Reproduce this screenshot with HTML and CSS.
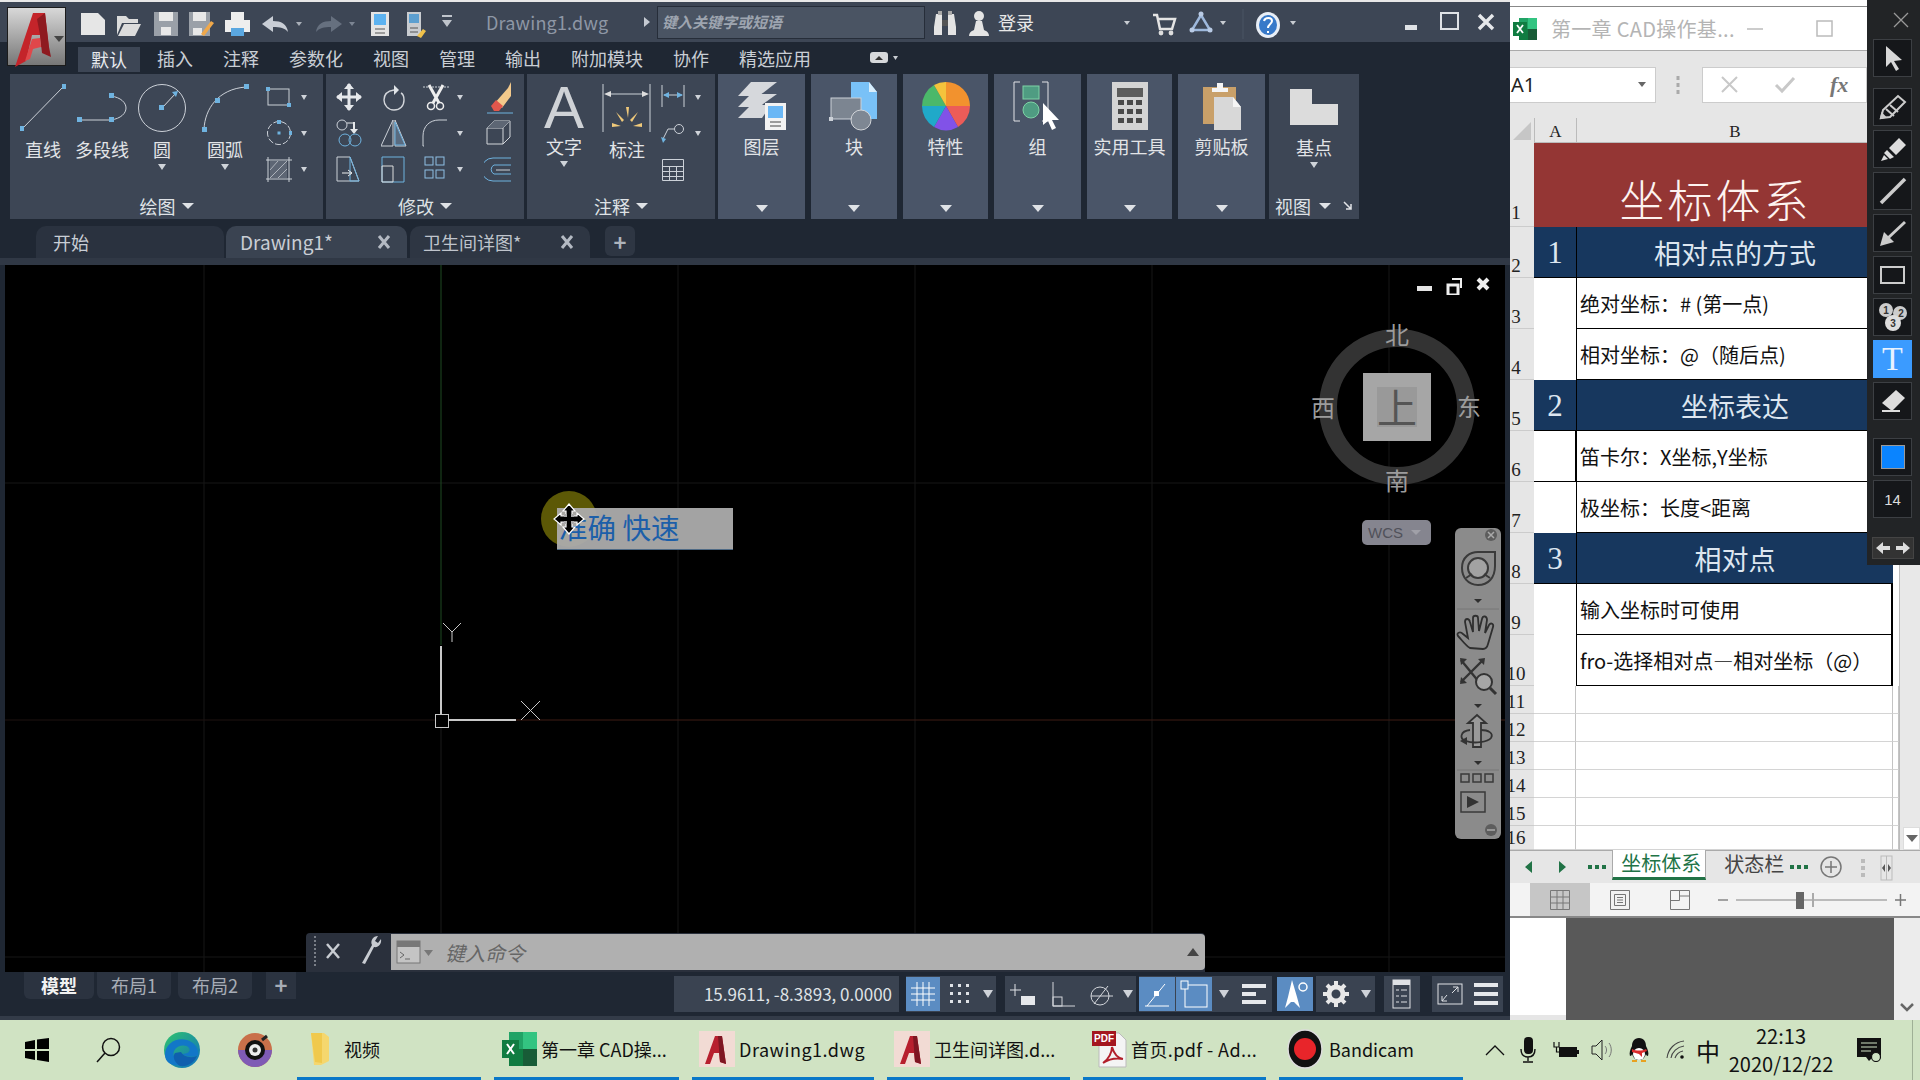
FILE: index.html
```html
<!DOCTYPE html>
<html lang="zh">
<head>
<meta charset="utf-8">
<title>AutoCAD and Excel</title>
<link rel="stylesheet" href="styles.css">
</head>
<body>
<main class="desk">

<!-- AutoCAD window -->
<section class="cad">
  <div class="cad-logo">
    <svg width="59" height="59" viewBox="7 7 59 59"><path d="M14 66 32 12h12l4 36-8-2-1-12-8 0-6 26z" fill="#c4242a"/><path d="M44 12l4 34 2 10-9-4-2-18-3-16z" fill="#8e1a20"/><path d="M24 60l7-22 8-1 1 9-8 2-3 10z" fill="#e0474a"/><path d="M53 35h10l-5 6z" fill="#444"/></svg>
  </div>
  <header class="cad-title">
    <svg class="qat" width="380" height="40" viewBox="78 2 380 40">
      <path d="M81 13h17l7 7v15H81z" fill="#e6e6e6"/>
      <path d="M117 16h9l3 3h9v4h-16l-5 12zM124 24h17l-6 12h-17z" fill="#dcdcdc"/>
      <path d="M154 12h24v24h-24z" fill="#9aa0a8"/><rect x="159" y="12" width="14" height="9" fill="#e8e8e8"/><rect x="161" y="27" width="10" height="8" fill="#e8e8e8"/>
      <path d="M189 12h21v24h-21z" fill="#9aa0a8"/><rect x="193" y="12" width="13" height="9" fill="#e8e8e8"/><rect x="193" y="28" width="9" height="7" fill="#e8e8e8"/><path d="M201 34l10-13 3 2-10 13z" fill="#f0a84a"/>
      <rect x="225" y="20" width="25" height="12" fill="#eee"/><rect x="231" y="12" width="13" height="8" fill="#eee"/><rect x="231" y="28" width="13" height="8" fill="#5aa7e0"/>
      <path d="M262 24l11-8v5c8 0 14 3 15 11-3-4-8-5-15-5v5z" fill="#c9ced6"/><path d="M296 22h6l-3 4z" fill="#a9afb8"/>
      <path d="M342 24l-11-8v5c-8 0-14 3-15 11 3-4 8-5 15-5v5z" fill="#66707f"/><path d="M349 22h6l-3 4z" fill="#7c8593"/>
      <rect x="371" y="12" width="18" height="24" fill="#e4e4e4"/><rect x="374" y="14" width="12" height="11" fill="#5cb2f0"/><path d="M375 29h10M375 33h10" stroke="#555"/>
      <rect x="407" y="12" width="14" height="24" fill="#c9ccd0"/><rect x="409" y="14" width="10" height="9" fill="#5c9fd0"/><path d="M410 28h8M410 32h8" stroke="#555"/><path d="M417 36l6-7 3 2-5 7z" fill="#f0c14a"/>
      <path d="M442 15h10v2h-10zM442 20h10l-5 7z" fill="#bfc4cb"/>
    </svg>
    <span class="doc-name">Drawing1.dwg</span>
    <svg class="next" width="10" height="14" viewBox="0 0 10 14"><path d="M2 2l6 5-6 5z" fill="#c5cad2"/></svg>
    <div class="search">键入关键字或短语</div>
    <svg class="binoc" width="58" height="30" viewBox="935 8 58 30"><path d="M938 15h6v21h-8v-8zM950 15h6l2 13v8h-8z" fill="#e4e4e4"/><path d="M944 21h6v6h-6z" fill="#555"/><path d="M940 12h4v4h-4zM950 12h4v4h-4z" fill="#aaa"/><circle cx="981" cy="17" r="5" fill="#e4e4e4"/><path d="M978 22h6l2 9h-10zM971 37c0-5 6-7 10-7s10 2 10 7z" fill="#e4e4e4"/></svg>
    <span class="login">登录</span>
    <svg class="tray" width="180" height="40" viewBox="1122 2 180 40"><path d="M1126 21h6l-3 4zM1222 21h6l-3 4zM1292 21h6l-3 4z" fill="#c8ccd2"/><path d="M1155 15h4l3 14h12l3-10h-17" fill="none" stroke="#e4e4e4" stroke-width="2.5"/><circle cx="1163" cy="33" r="2.4" fill="#ddd"/><circle cx="1173" cy="33" r="2.4" fill="#ddd"/><path d="M1203 15l-9 15h18z" fill="none" stroke="#9db8dc" stroke-width="2.5"/><circle cx="1203" cy="14" r="2.5" fill="#b9cbe5"/><circle cx="1194" cy="30" r="2.5" fill="#b9cbe5"/><circle cx="1212" cy="30" r="2.5" fill="#b9cbe5"/><path d="M1245 9v30" stroke="#4b5564"/><ellipse cx="1270" cy="25" rx="12" ry="13" fill="#e8eef6"/><ellipse cx="1270" cy="25" rx="9" ry="10" fill="#3779c9"/><path d="M1266 21c1-4 8-4 8 0 0 3-4 3-4 7M1270 31v2" stroke="#fff" stroke-width="2" fill="none"/></svg>
    <svg class="winbtns" width="105" height="40" viewBox="1400 2 105 40"><path d="M1407 25h12v5h-12z" fill="#dfe2e6"/><rect x="1443" y="13" width="17" height="16" fill="none" stroke="#dfe2e6" stroke-width="2"/><path d="M1481 15l14 14M1495 15l-14 14" stroke="#e6e8eb" stroke-width="3.4"/></svg>
  </header>

  <nav class="cad-menu">
    <span class="menu-item on">默认</span><span class="menu-item">插入</span><span class="menu-item">注释</span><span class="menu-item">参数化</span><span class="menu-item">视图</span><span class="menu-item">管理</span><span class="menu-item">输出</span><span class="menu-item">附加模块</span><span class="menu-item">协作</span><span class="menu-item">精选应用</span>
    <svg class="menu-toggle" width="30" height="14" viewBox="0 0 30 14"><rect x="1" y="1" width="18" height="11" rx="3" fill="#d7d9dc"/><path d="M6 9l4-4 4 4z" fill="#333"/><path d="M24 5h5l-2.5 4z" fill="#c8ccd2"/></svg>
  </nav>

  <div class="ribbon">
    <div class="panel p-draw">
      <div class="p-body">
        <div class="tool w58">
          <svg width="46" height="48" viewBox="19 84 46 48"><path d="M21 129 63 86" stroke="#ccd1d8" fill="none"/><rect x="18" y="126" width="5" height="5" fill="#6fb3e0"/><rect x="61" y="84" width="5" height="5" fill="#6fb3e0"/></svg>
          <span class="tl">直线</span>
        </div>
        <div class="tool w60">
          <svg width="56" height="48" viewBox="74 84 56 48"><path d="M80 120h31M111 96c20 3 20 21 0 24" stroke="#ccd1d8" fill="none"/><g fill="#6fb3e0"><rect x="77" y="117" width="5" height="5"/><rect x="109" y="117" width="5" height="5"/><rect x="109" y="93" width="5" height="5"/></g></svg>
          <span class="tl">多段线</span>
        </div>
        <div class="tool w60">
          <svg width="50" height="48" viewBox="137 84 50 48"><ellipse cx="162" cy="108" rx="23.5" ry="23.5" fill="none" stroke="#ccd1d8"/><path d="M162 108l14-15" stroke="#d8dce2"/><path d="M178 91l-6 1 4 5z" fill="#6fb3e0"/><rect x="159" y="105" width="5" height="5" fill="#6fb3e0"/></svg>
          <span class="tl">圆</span><i class="tcaret"></i>
        </div>
        <div class="tool w66">
          <svg width="48" height="48" viewBox="202 84 48 48"><path d="M205 129c1-20 14-40 42-42" stroke="#ccd1d8" fill="none"/><g fill="#6fb3e0"><rect x="203" y="127" width="5" height="5"/><rect x="216" y="98" width="5" height="5"/><rect x="245" y="84" width="5" height="5"/></g></svg>
          <span class="tl">圆弧</span><i class="tcaret"></i>
        </div>
        <div class="small-col sc-draw">
          <div class="srow"><svg width="26" height="28" viewBox="266 83 26 28"><rect x="268" y="89" width="21" height="16" fill="none" stroke="#ccd1d8"/><g fill="#6fb3e0"><rect x="266" y="87" width="4" height="4"/><rect x="287" y="103" width="4" height="4"/></g></svg><i class="scaret"></i></div>
          <div class="srow"><svg width="26" height="28" viewBox="266 119 26 28"><circle cx="279" cy="133" r="11.5" fill="none" stroke="#ccd1d8" stroke-dasharray="6 2"/><rect x="277.5" y="131.500" width="3" height="3" fill="#6fb3e0"/><rect x="277" y="120" width="4" height="4" fill="#6fb3e0"/><rect x="289" y="131" width="4" height="4" fill="#6fb3e0"/></svg><i class="scaret"></i></div>
          <div class="srow"><svg width="26" height="28" viewBox="266 155 26 28"><path d="M268 157v25M289 157v25M266 160h26M266 179h26" stroke="#ccd1d8" fill="none"/><rect x="270" y="161" width="17" height="17" fill="#5d6674"/><path d="M270 170l8-9M270 178l17-17M278 178l9-9" stroke="#aeb4bc"/></svg><i class="scaret"></i></div>
        </div>
      </div>
      <div class="p-foot">绘图<i class="fcaret"></i></div>
    </div>

    <div class="panel p-mod">
      <div class="p-body mod-grid">
        <svg width="26" height="28" viewBox="336 83 26 28"><path d="M349 84v26M337 97h24" stroke="#e6e8eb" stroke-width="3"/><path d="M349 83l-5 6h10zM349 111l-5-6h10zM336 97l6-5v10zM362 97l-6-5v10z" fill="#e6e8eb"/></svg>
        <svg width="26" height="28" viewBox="380 83 26 28"><path d="M393 90c-7 1-10 5-10 10s4 10 10 10 10-4 10-10c0-3-1-6-3-7" fill="none" stroke="#d3d6db" stroke-width="1.400"/><path d="M393 85l5 5-5 5z" fill="#e0e3e7"/></svg>
        <div class="mcell"><svg width="28" height="28" viewBox="422 83 28 28"><path d="M423 87h26" stroke="#ccd1d8" stroke-dasharray="2 1"/><path d="M429 85l10 18M443 85l-10 18" stroke="#eee" stroke-width="3"/><circle cx="431" cy="106" r="3.500" fill="none" stroke="#eee" stroke-width="1.500"/><circle cx="440" cy="106" r="3.500" fill="none" stroke="#eee" stroke-width="1.500"/></svg><i class="scaret"></i></div>
        <svg width="30" height="36" viewBox="483 80 30 36"><path d="M493 105l14-16 3-6v14l-9 12z" fill="#f3c98b"/><path d="M490 107l5-6 7 6-4 5h-5z" fill="#e2574c"/><path d="M486 114h26" stroke="#6fb3e0"/></svg>

        <svg width="26" height="30" viewBox="336 118 26 30"><circle cx="342" cy="125" r="5" fill="none" stroke="#ccd1d8"/><path d="M354 122v7" stroke="#e6e8eb" stroke-width="2"/><path d="M350 129h8l-4 5z" fill="#e6e8eb"/><path d="M347 123h7" stroke="#e6e8eb"/><circle cx="345" cy="140" r="6" fill="none" stroke="#6fb3e0"/><circle cx="355" cy="140" r="6" fill="none" stroke="#6fb3e0"/></svg>
        <svg width="26" height="30" viewBox="380 118 26 30"><path d="M392 120v26h-12zM394 120v26h11z" fill="none" stroke="#ccd1d8"/><path d="M394 122l10 23h-10z" fill="#596b80" stroke="#6fb3e0"/></svg>
        <div class="mcell"><svg width="28" height="28" viewBox="422 119 28 28"><path d="M423 146v-10c0-10 7-16 16-16h8" fill="none" stroke="#ccd1d8"/><path d="M423 146h1" stroke="#ccd1d8"/></svg><i class="scaret"></i></div>
        <svg width="30" height="30" viewBox="483 118 30 30"><path d="M486 128h16v16h-16zM486 128l7-7h16l-7 7M502 144l7-7v-16" fill="none" stroke="#d3d6db"/><path d="M486 128l7-7h16l-7 7z" fill="#5d6674"/></svg>

        <svg width="28" height="30" viewBox="336 154 28 30"><path d="M338 157h13l9 24h-22z" fill="none" stroke="#ccd1d8"/><path d="M351 157l9 24H351z" fill="none" stroke="#6fb3e0"/><path d="M343 173h9M349 170l4 3-4 3" stroke="#eee" fill="none"/></svg>
        <svg width="28" height="30" viewBox="379 154 28 30"><path d="M381 157h22v25h-22z" fill="none" stroke="#6fb3e0"/><path d="M381 166h11v16h-11z" fill="none" stroke="#ddd"/></svg>
        <div class="mcell"><svg width="28" height="28" viewBox="422 155 28 28"><g fill="none" stroke="#8fc0e6"><rect x="425" y="157" width="8" height="8"/><rect x="436" y="157" width="8" height="8"/><rect x="425" y="170" width="8" height="8"/><rect x="436" y="170" width="8" height="8"/></g></svg><i class="scaret"></i></div>
        <svg width="30" height="30" viewBox="483 154 30 30"><path d="M510 158h-18a11 11 0 0 0 0 23h18M510 165h-17a5 5 0 0 0 0 9h17" fill="none" stroke="#6fb3e0"/><path d="M495 170h14" stroke="#ccd1d8"/></svg>
      </div>
      <div class="p-foot">修改<i class="fcaret"></i></div>
    </div>

    <div class="panel p-ann">
      <div class="p-body">
        <div class="tool w74"><span class="big-a">A</span><span class="tl tl-a">文字</span><i class="tcaret"></i></div>
        <div class="tool w52">
          <svg width="50" height="48" viewBox="602 84 50 48"><path d="M603 84v48M650 84v48M606 94h41" stroke="#ccd1d8" fill="none"/><path d="M604 94l7-3v6zM649 94l-7-3v6z" fill="#ddd"/><g fill="#f0c97a"><path d="M626 107h3l-1 11zM612 123l9 3-9 1zM642 123l-9 3 9 1zM616 112l8 8-2 2zM638 112l-8 8 2 2z"/></g></svg>
          <span class="tl">标注</span>
        </div>
        <div class="small-col sc-ann">
          <div class="srow"><svg width="26" height="28" viewBox="662 83 26 28"><path d="M664 85v22M686 85v22M666 95h18" stroke="#ccd1d8" fill="none"/><path d="M665 95l6-3v6zM685 95l-6-3v6z" fill="#6fb3e0"/></svg><i class="scaret"></i></div>
          <div class="srow"><svg width="26" height="30" viewBox="662 118 26 30"><circle cx="681" cy="129" r="4.500" fill="none" stroke="#ccd1d8"/><path d="M676 129h-6l-5 10" fill="none" stroke="#ccd1d8"/><path d="M665 143l-2-6 5 2z" fill="#6fb3e0"/></svg><i class="scaret"></i></div>
          <div class="srow"><svg width="26" height="26" viewBox="662 156 26 26"><path d="M664.500 159.500h21v21h-21zM664.500 166.500h21M664.500 171.500h21M664.500 176.500h21M671.500 166.500v14M678.500 166.500v14" fill="none" stroke="#ccd1d8"/></svg></div>
        </div>
      </div>
      <div class="p-foot">注释<i class="fcaret"></i></div>
    </div>

    <div class="panel large w87">
      <svg width="60" height="50" viewBox="732 81 60 50"><g fill="#d6d8dc"><path d="M751 82h26l-18 14h-21z"/><path d="M751 94h26l-18 13h-21z"/><path d="M751 105h20l-9 13h-24z"/></g><rect x="765" y="103" width="21" height="27" fill="#f2f2f2"/><rect x="768" y="106" width="15" height="12" fill="#6ab7f5"/><path d="M770 122h11M770 126h11" stroke="#444"/></svg>
      <span class="tl">图层</span><i class="lcaret"></i>
    </div>
    <div class="panel large w86">
      <svg width="60" height="50" viewBox="825 81 60 50"><path d="M852 82h18l8 10v27h-26z" fill="#79c1f7"/><path d="M870 82l8 10h-8z" fill="#d9eefc"/><rect x="832" y="98" width="30" height="21" fill="#7c8591" stroke="#ccd1d8"/><rect x="830" y="117" width="4" height="4" fill="#ccd1d8"/><circle cx="862" cy="120" r="10" fill="#7e8793" stroke="#d2d5d9"/></svg>
      <span class="tl">块</span><i class="lcaret"></i>
    </div>
    <div class="panel large w85">
      <svg width="52" height="50" viewBox="920 81 52 50"><path d="M946 106 946 82A24 24 0 0 1 970 106z" fill="#f2922e"/><path d="M946 106H970A24 24 0 0 1 958 127z" fill="#ec5c58"/><path d="M946 106 958 127A24 24 0 0 1 934 127z" fill="#8152e8"/><path d="M946 106 934 127A24 24 0 0 1 922 106z" fill="#20a9c9"/><path d="M946 106H922A24 24 0 0 1 934 85z" fill="#4bb86a"/><path d="M946 106 934 85A24 24 0 0 1 946 82z" fill="#f4c33c"/></svg>
      <span class="tl">特性</span><i class="lcaret"></i>
    </div>
    <div class="panel large w87">
      <svg width="52" height="50" viewBox="1014 81 52 50"><path d="M1022 82h-6v39h6M1044 82h6v39h-6" fill="none" stroke="#e2e4e7"/><rect x="1025" y="86" width="16" height="13" fill="#4f9c82" stroke="#7ed3a6"/><ellipse cx="1033" cy="110" rx="8" ry="8" fill="#4f9c82" stroke="#7ed3a6"/><path d="M1045 103v22l5-4 4 9 4-2-4-8h7z" fill="#fff"/></svg>
      <span class="tl">组</span><i class="lcaret"></i>
    </div>
    <div class="panel large w85">
      <svg width="40" height="50" viewBox="1110 81 40 50"><rect x="1112" y="82" width="36" height="48" fill="#d4d4d4"/><rect x="1117" y="88" width="26" height="9" fill="#5c5c5c"/><g fill="#4a4a4a"><rect x="1118" y="100" width="6" height="5"/><rect x="1127" y="100" width="6" height="5"/><rect x="1136" y="100" width="6" height="5"/><rect x="1118" y="109" width="6" height="5"/><rect x="1127" y="109" width="6" height="5"/><rect x="1136" y="109" width="6" height="5"/><rect x="1118" y="118" width="6" height="5"/><rect x="1127" y="118" width="6" height="5"/><rect x="1136" y="118" width="6" height="5"/></g></svg>
      <span class="tl">实用工具</span><i class="lcaret"></i>
    </div>
    <div class="panel large w87">
      <svg width="44" height="50" viewBox="1200 81 44 50"><rect x="1203" y="87" width="33" height="37" fill="#c9a069"/><path d="M1214 97h19l8 10v23h-27z" fill="#d8d8d8"/><path d="M1233 97l8 10h-8z" fill="#f5f5f5"/><path d="M1212 92h16v-4h-5v-5h-6v5h-5z" fill="#f5f5f5"/></svg>
      <span class="tl">剪贴板</span><i class="lcaret"></i>
    </div>
    <div class="panel view-p">
      <div class="p-body view-body">
        <svg width="52" height="38" viewBox="1288 88 52 38"><path d="M1290 89h22v15h26v21h-48z" fill="#dcdcdc"/></svg>
        <span class="tl">基点</span><i class="tcaret"></i>
      </div>
      <div class="p-foot view-foot">视图<i class="fcaret"></i><svg class="launch" width="10" height="10" viewBox="0 0 10 10"><path d="M1 1l7 7M8 3v5H3" fill="none" stroke="#e2e4e7" stroke-width="1.500"/></svg></div>
    </div>
  </div>

  <div class="tabs">
    <div class="tab t-start">开始</div>
    <div class="tab t-active">Drawing1*<svg width="14" height="14" viewBox="0 0 14 14"><path d="M2 1l10 12M12 1 2 13" stroke="#b4bac3" stroke-width="3"/></svg></div>
    <div class="tab t-other">卫生间详图*<svg width="14" height="14" viewBox="0 0 14 14"><path d="M2 1l10 12M12 1 2 13" stroke="#b4bac3" stroke-width="3"/></svg></div>
    <div class="tab-add">+</div>
  </div>

  <div class="canvas">
    <svg class="cv-lines" width="1500" height="707" viewBox="5 265 1500 707">
      <g stroke="#171717"><path d="M204 265v707M678 265v707M915 265v707M1152 265v707M1389 265v707M5 246h1500M5 483h1500M5 957h1500"/></g>
      <circle cx="569" cy="519" r="28" fill="#5c5806"/>
      <path d="M441 265v380" stroke="#1f4a22"/><path d="M441 728v244" stroke="#1a1a1a"/><path d="M516 720h989" stroke="#3f1d14"/><path d="M5 720h430" stroke="#1e1210"/>
      <path d="M441 646v68M449 720h67" stroke="#c8c8c8" stroke-width="2"/><rect x="435.500" y="714.500" width="13" height="13" fill="none" stroke="#c8c8c8"/>
      <path d="M443 623l9 9 9-9M452 632v10" fill="none" stroke="#c8c8c8"/><path d="M521 701l19 19M540 701l-19 19" stroke="#c8c8c8"/>
    </svg>
    <div class="mtext">准确 快速</div>
    <svg class="cursor" width="32" height="32" viewBox="0 0 32 32"><path d="M16 1l6 7h-3v5h5v-3l7 6-7 6v-3h-5v5h3l-6 7-6-7h3v-5H8v3l-7-6 7-6v3h5V8h-3z" fill="#000" stroke="#fff" stroke-width="1.200"/><g fill="#aaa"><rect x="11" y="11" width="3" height="3"/><rect x="18" y="11" width="3" height="3"/><rect x="11" y="18" width="3" height="3"/><rect x="18" y="18" width="3" height="3"/></g></svg>

    <svg class="vp-ctrl" width="80" height="20" viewBox="1415 275 80 20"><rect x="1417" y="286" width="15" height="5" fill="#e4e4e4"/><path d="M1448 285h10v10h-10z" fill="none" stroke="#eee" stroke-width="3"/><path d="M1452 279h9v9" fill="none" stroke="#eee" stroke-width="2"/><path d="M1478 279l10 10M1488 279l-10 10" stroke="#eee" stroke-width="4"/></svg>

    <div class="cube">
      <div class="ring"></div>
      <div class="cube-face"><span>上</span></div>
      <span class="cd cd-n">北</span><span class="cd cd-s">南</span><span class="cd cd-w">西</span><span class="cd cd-e">东</span>
    </div>
    <div class="wcs">WCS<i class="wcaret"></i></div>

    <svg class="navbar" width="46" height="311" viewBox="1455 528 46 311">
      <rect x="1455" y="528" width="46" height="311" rx="6" fill="#8b8b8b"/>
      <circle cx="1491" cy="535" r="6" fill="#5d5d5d"/><path d="M1488 532l6 6M1494 532l-6 6" stroke="#aaa" stroke-width="1.500"/>
      <path d="M1462 568c0-11 8-16 16-16h17v14c0 12-7 19-17 19s-16-8-16-17z" fill="none" stroke="#3a3a3a" stroke-width="2"/>
      <circle cx="1478" cy="568" r="10" fill="#a2a2a2" stroke="#3a3a3a" stroke-width="2"/><path d="M1466 578l6-4M1490 578l-6-4" stroke="#3a3a3a" stroke-width="2"/>
      <path d="M1474 599h8l-4 4z" fill="#2e2e2e"/><path d="M1457 609h42" stroke="#777"/>
      <path d="M1470 648c-5-3-8-8-12-12-2-3 2-5 5-2l5 4-3-16c0-4 4-4 5 0l3 10 0-14c0-3 5-3 5 0l1 13 3-12c1-4 5-3 5 1l-2 13 4-8c2-3 5-1 4 2l-5 17c-1 4-3 5-5 5z" fill="none" stroke="#2f2f2f" stroke-width="1.800"/>
      <path d="M1461 660l18 22M1483 660l-22 22" stroke="#333" stroke-width="2.400"/><path d="M1460 658l7 1-6 6zM1485 658l-1 7-6-6zM1460 684l1-7 6 6z" fill="#333"/><circle cx="1484" cy="682" r="8" fill="#a6a6a6" stroke="#333" stroke-width="2"/><path d="M1490 688l6 6" stroke="#333" stroke-width="3"/>
      <path d="M1474 704h8l-4 4z" fill="#2e2e2e"/>
      <path d="M1473 747v-24h-5l9-8 9 8h-5v24z" fill="#999" stroke="#333" stroke-width="1.800"/><path d="M1470 730c-10 1-11 9-4 11 8 3 22 1 25-3 3-5-3-8-10-8" fill="none" stroke="#333" stroke-width="1.800"/><path d="M1467 737l-7 4 7 4z" fill="#333"/>
      <path d="M1474 761h8l-4 4z" fill="#2e2e2e"/><path d="M1457 770h42" stroke="#777"/>
      <g fill="none" stroke="#3a3a3a" stroke-width="1.500"><rect x="1461" y="774" width="8" height="8"/><rect x="1473" y="774" width="8" height="8"/><rect x="1485" y="774" width="8" height="8"/><rect x="1461" y="792" width="24" height="20"/></g><path d="M1467 796l12 6-12 6z" fill="#333"/>
      <circle cx="1491" cy="830" r="6" fill="#5d5d5d"/><path d="M1487 830h8" stroke="#aaa" stroke-width="1.500"/>
    </svg>

    <div class="cmd">
      <div class="cmd-tools">
        <svg width="80" height="36" viewBox="310 936 80 36"><path d="M319 939v30" stroke="#c8ccd2" stroke-dasharray="2 2"/><path d="M331 947l12 14M343 947l-12 14" stroke="#c8ccd2" stroke-width="2.500"/><path d="M366 966l10-18c-2-4 1-9 6-9l-3 5 3 2 3-4c1 5-3 9-7 8l-9 17z" fill="#c8ccd2"/></svg>
      </div>
      <div class="cmd-input">
        <svg width="42" height="26" viewBox="0 0 42 26"><rect x="6" y="2" width="23" height="22" fill="#c4c4c4" stroke="#777"/><rect x="6" y="2" width="23" height="6" fill="#777"/><path d="M9 13l4 3-4 3M14 20h5" stroke="#666" fill="none"/><path d="M33 11h9l-4.500 6z" fill="#777"/></svg>
        <span class="cmd-ph">键入命令</span>
        <svg class="cmd-up" width="12" height="8" viewBox="0 0 12 8"><path d="M0 8l6-8 6 8z" fill="#444"/></svg>
      </div>
    </div>
  </div>

  <footer class="cad-status">
    <div class="lt lt-on">模型</div><div class="lt">布局1</div><div class="lt">布局2</div><div class="lt-add">+</div>
    <div class="st-right">
      <div class="coords">15.9611, -8.3893, 0.0000</div>
      <div class="sg sg-snap">
        <div class="sb on w34"><svg width="26" height="28" viewBox="0 0 26 28"><path d="M7 2v24M13 2v24M19 2v24M1 8h24M1 14h24M1 20h24" stroke="#fff"/></svg></div>
        <div class="sb w38"><svg width="26" height="26" viewBox="0 0 26 26"><g fill="#e0e3e7"><rect x="3" y="3" width="3" height="3"/><rect x="11" y="3" width="3" height="3"/><rect x="19" y="3" width="3" height="3"/><rect x="3" y="11" width="3" height="3"/><rect x="11" y="11" width="3" height="3"/><rect x="19" y="11" width="3" height="3"/><rect x="3" y="19" width="3" height="3"/><rect x="11" y="19" width="3" height="3"/><rect x="19" y="19" width="3" height="3"/></g></svg></div>
        <div class="sb w16"><i class="scaret big"></i></div>
      </div>
      <div class="sg">
        <div class="sb w36"><svg width="28" height="28" viewBox="0 0 28 28"><path d="M6 4v12M1 10h11" stroke="#e0e3e7"/><rect x="12" y="16" width="14" height="9" fill="#e6e8eb"/></svg></div>
        <div class="sb w40"><svg width="26" height="28" viewBox="0 0 26 28"><path d="M4 2v24h24" fill="none" stroke="#d3d6db"/><rect x="4" y="17" width="9" height="9" fill="none" stroke="#d3d6db"/></svg></div>
        <div class="sb w36"><svg width="26" height="28" viewBox="0 0 26 28"><circle cx="12" cy="16" r="9" fill="none" stroke="#d3d6db"/><path d="M6 24 20 6M3 16h22" stroke="#d3d6db"/></svg></div>
        <div class="sb w16"><i class="scaret big"></i></div>
      </div>
      <div class="sg">
        <div class="sb on w36"><svg width="28" height="28" viewBox="0 0 28 28"><path d="M2 26h24M4 26 22 4" stroke="#fff" fill="none"/><rect x="11" y="11" width="5" height="5" fill="#fff"/></svg></div>
        <div class="sb on w36"><svg width="30" height="30" viewBox="0 0 30 30"><rect x="6" y="6" width="22" height="22" fill="none" stroke="#fff"/><rect x="2" y="2" width="7" height="8" fill="#5b8cc2" stroke="#fff"/></svg></div>
        <div class="sb w22"><i class="scaret big"></i></div>
        <div class="sb w36"><svg width="28" height="26" viewBox="0 0 28 26"><path d="M2 5h24M2 13h14M2 21h24" stroke="#e6e8eb" stroke-width="4"/></svg></div>
      </div>
      <div class="sg bare">
        <div class="sb on w36"><svg width="30" height="30" viewBox="0 0 30 30"><path d="M12 1l5 17 3 11-6-6h-3l-6 6 3-11z" fill="#fff"/><circle cx="23" cy="8" r="4" fill="none" stroke="#fff" stroke-width="1.500"/></svg></div>
      </div>
      <div class="sg">
        <div class="sb w40"><svg width="28" height="28" viewBox="0 0 28 28"><circle cx="14" cy="14" r="7" fill="none" stroke="#e8e8e8" stroke-width="5"/><path d="M14 1v26M1 14h26M5 5l18 18M23 5 5 23" stroke="#e8e8e8" stroke-width="4" stroke-dasharray="5 16"/></svg></div>
        <div class="sb w18"><i class="scaret big"></i></div>
      </div>
      <div class="sg sg-cust">
        <div class="sb w36"><svg width="20" height="30" viewBox="0 0 20 30"><rect x="1" y="1" width="17" height="28" fill="none" stroke="#dfe2e6"/><rect x="1" y="1" width="17" height="5" fill="#dfe2e6"/><path d="M4 11h3M9 11h6M4 17h3M9 17h6M4 23h3M9 23h6" stroke="#dfe2e6"/></svg></div>
      </div>
      <div class="sg sg-last">
        <div class="sb w36"><svg width="26" height="24" viewBox="0 0 26 24"><rect x="1" y="2" width="24" height="20" fill="none" stroke="#dfe2e6"/><path d="M15 11l6-6M21 10V5h-5M5 19l5-6M5 14v5h5" stroke="#dfe2e6" fill="none"/></svg></div>
        <div class="sb w34"><svg width="28" height="26" viewBox="0 0 28 26"><path d="M2 4h24M2 13h24M2 22h24" stroke="#e6e8eb" stroke-width="4"/></svg></div>
      </div>
    </div>
  </footer>
</section>

<!-- Excel window -->
<section class="xl">
  <div class="xl-top"></div>
  <header class="xl-title">
    <svg width="26" height="24" viewBox="0 0 26 24"><rect x="7" y="1" width="18" height="22" fill="#21a366"/><rect x="16" y="1" width="9" height="11" fill="#33c481"/><rect x="7" y="12" width="9" height="11" fill="#107c41"/><rect x="16" y="12" width="9" height="11" fill="#185c37"/><rect x="1" y="5" width="14" height="14" fill="#107c41"/><path d="M5 8l6 8M11 8l-6 8" stroke="#fff" stroke-width="1.800"/></svg>
    <span class="xl-name">第一章 CAD操作基...</span>
    <svg class="xl-btns" width="100" height="20" viewBox="0 0 100 20"><path d="M0 10h16" stroke="#bbb" stroke-width="1.500"/><rect x="70" y="2" width="15" height="15" fill="none" stroke="#bbb" stroke-width="1.500"/></svg>
  </header>
  <div class="xl-formula">
    <div class="namebox">A1<i class="nb-caret"></i></div>
    <svg class="fdots" width="4" height="18" viewBox="0 0 4 18"><path d="M2 0v4M2 7v4M2 14v4" stroke="#aaa" stroke-width="3"/></svg>
    <div class="fbox">
      <svg width="20" height="18" viewBox="0 0 20 18"><path d="M2 1l15 15M17 1 2 16" stroke="#c8c8c8" stroke-width="2"/></svg>
      <svg width="22" height="18" viewBox="0 0 22 18"><path d="M2 9l6 6L20 2" fill="none" stroke="#c8c8c8" stroke-width="3"/></svg>
      <span class="fx">fx</span>
    </div>
  </div>
  <div class="xl-body">
    <div class="sheet">
      <div class="cell corner"><svg width="18" height="18" viewBox="0 0 18 18"><path d="M18 0v18H0z" fill="#c6c6c6"/></svg></div>
      <div class="cell colhead">A</div><div class="cell colhead">B</div><div class="cell blank-h"></div>

      <div class="cell rowhead r-big"><span>1</span></div><div class="cell title-red">坐标体系</div><div class="cell filler"></div>
      <div class="cell rowhead"><span>2</span></div><div class="cell navy-n">1</div><div class="cell navy-t">相对点的方式</div><div class="cell filler"></div>
      <div class="cell rowhead"><span>3</span></div><div class="cell wa"></div><div class="cell body-c">绝对坐标：# (第一点)</div><div class="cell filler"></div>
      <div class="cell rowhead"><span>4</span></div><div class="cell wa"></div><div class="cell body-c">相对坐标：@（随后点)</div><div class="cell filler"></div>
      <div class="cell rowhead"><span>5</span></div><div class="cell navy-n">2</div><div class="cell navy-t">坐标表达</div><div class="cell filler"></div>
      <div class="cell rowhead"><span>6</span></div><div class="cell wa wa-b"></div><div class="cell body-c">笛卡尔：X坐标,Y坐标</div><div class="cell filler"></div>
      <div class="cell rowhead"><span>7</span></div><div class="cell wa"></div><div class="cell body-c">极坐标：长度&lt;距离</div><div class="cell filler"></div>
      <div class="cell rowhead"><span>8</span></div><div class="cell navy-n">3</div><div class="cell navy-t">相对点</div><div class="cell filler"></div>
      <div class="cell rowhead"><span>9</span></div><div class="cell wa"></div><div class="cell body-c">输入坐标时可使用</div><div class="cell filler"></div>
      <div class="cell rowhead"><span>10</span></div><div class="cell wa"></div><div class="cell body-c">fro-选择相对点—相对坐标（@）</div><div class="cell filler"></div>
      <div class="cell rowhead"><span>11</span></div><div class="cell gc"></div><div class="cell gc"></div><div class="cell gc"></div>
      <div class="cell rowhead"><span>12</span></div><div class="cell gc"></div><div class="cell gc"></div><div class="cell gc"></div>
      <div class="cell rowhead"><span>13</span></div><div class="cell gc"></div><div class="cell gc"></div><div class="cell gc"></div>
      <div class="cell rowhead"><span>14</span></div><div class="cell gc"></div><div class="cell gc"></div><div class="cell gc"></div>
      <div class="cell rowhead"><span>15</span></div><div class="cell gc"></div><div class="cell gc"></div><div class="cell gc"></div>
      <div class="cell rowhead"><span>16</span></div><div class="cell gc"></div><div class="cell gc"></div><div class="cell gc"></div>
    </div>
    <div class="vscroll"><div class="vdown"><svg width="12" height="7" viewBox="0 0 12 7"><path d="M0 0h12L6 7z" fill="#666"/></svg></div></div>
  </div>
  <div class="xl-sheets">
    <svg class="nav-arrows" width="90" height="16" viewBox="0 0 90 16"><path d="M7 2v12L0 8zM34 2v12l7-6zM63 6h4v4h-4zM70 6h4v4h-4zM77 6h4v4h-4z" fill="#217346"/></svg>
    <div class="stab">坐标体系</div>
    <div class="stab2">状态栏</div>
    <svg class="sheet-rest" width="132" height="30" viewBox="0 0 132 30"><path d="M2 14h4v4H2zM9 14h4v4H9zM16 14h4v4h-4z" fill="#217346"/><circle cx="43" cy="16" r="10" fill="none" stroke="#777" stroke-width="1.500"/><path d="M43 10v12M37 16h12" stroke="#777" stroke-width="1.500"/><path d="M73 8h4v4h-4zM73 15h4v4h-4zM73 22h4v4h-4z" fill="#bbb"/><rect x="93" y="5" width="11" height="24" fill="none" stroke="#bbb"/><path d="M98.500 5v24" stroke="#bbb"/><path d="M97 13v8l-3-4zM100 13v8l3-4z" fill="#555"/></svg>
  </div>
  <div class="xl-status">
    <div class="view-on"><svg width="20" height="20" viewBox="0 0 20 20"><path d="M.5.500h19v19H.500zM7 .500v19M13 .500v19M.500 7h19M.500 13h19" fill="none" stroke="#777"/></svg></div>
    <div class="view-b"><svg width="20" height="20" viewBox="0 0 20 20"><path d="M.5.500h19v19H.500zM4.500 4.500h11v11h-11zM7 7.500h6M7 10h6M7 12.500h6" fill="none" stroke="#777"/></svg></div>
    <div class="view-b"><svg width="20" height="20" viewBox="0 0 20 20"><path d="M.5.500h19v19H.500zM.5 10.500h9V.500M9.500 6h10" fill="none" stroke="#777"/></svg></div>
    <svg class="zoomer" width="196" height="24" viewBox="0 0 196 24"><path d="M4 12h10M22 12h151" stroke="#888" stroke-width="1.500"/><path d="M22 12h151" stroke="#bbb" stroke-width="2"/><rect x="82" y="4" width="8" height="17" fill="#666"/><rect x="98" y="5" width="2" height="14" fill="#aaa"/><path d="M181 12h11M186.500 6v12" stroke="#777" stroke-width="1.500"/></svg>
  </div>
  <div class="xl-bottom">
    <div class="xl-left"></div>
    <div class="xl-gray"></div>
    <div class="xl-vb"><svg width="14" height="9" viewBox="0 0 14 9"><path d="M1 1l6 6 6-6" fill="none" stroke="#666" stroke-width="2.500"/></svg></div>
  </div>
</section>

<!-- Screen drawing toolbar -->
<aside class="pen">
  <svg class="pen-x" width="16" height="16" viewBox="0 0 16 16"><path d="M1 1l14 14M15 1 1 15" stroke="#999" stroke-width="1.300"/></svg>
  <div class="pb"><svg width="30" height="30" viewBox="0 0 30 30"><path d="M8 3v21l5-5 5 9 3-2-5-8 8-1z" fill="#d8d8d8"/></svg></div>
  <div class="pb g4"><svg width="30" height="30" viewBox="0 0 30 30"><path d="M3 26l2-8L20 4l7 6-15 15z" fill="none" stroke="#ccc" stroke-width="2"/><path d="M8 17l8 7M12 13l8 7M3 26l4-1-3-3z" stroke="#ccc" stroke-width="2" fill="#ccc"/></svg></div>
  <div class="pb"><svg width="30" height="30" viewBox="0 0 30 30"><path d="M11 14 21 4l7 7-10 10zM9 16l7 7-4 2-6-6z" fill="#ddd"/><path d="M3 27l3-6 4 4z" fill="#ddd"/></svg></div>
  <div class="pb"><svg width="30" height="30" viewBox="0 0 30 30"><path d="M3 27 27 3" stroke="#ccc" stroke-width="3.500"/></svg></div>
  <div class="pb"><svg width="30" height="30" viewBox="0 0 30 30"><path d="M10 20 27 4" stroke="#ccc" stroke-width="3"/><path d="M2 28l4-14 10 10z" fill="#ccc"/></svg></div>
  <div class="pb"><svg width="28" height="20" viewBox="0 0 28 20"><rect x="2" y="2" width="23" height="16" fill="none" stroke="#ccc" stroke-width="2"/></svg></div>
  <div class="pb"><svg width="30" height="32" viewBox="0 0 30 32"><circle cx="8" cy="9" r="7" fill="#ccc"/><circle cx="22" cy="12" r="7" fill="#ccc"/><circle cx="15" cy="22" r="8" fill="#ddd"/><text class="ball" x="8" y="13" text-anchor="middle">1</text><text class="ball" x="23" y="16" text-anchor="middle">2</text><text class="ball" x="15" y="26" text-anchor="middle">3</text></svg></div>
  <div class="pb pb-t">T</div>
  <div class="pb"><svg width="30" height="28" viewBox="0 0 30 28"><path d="M4 16 18 3l9 8-13 13z" fill="#ddd"/><path d="M4 24h18" stroke="#ddd" stroke-width="2"/></svg></div>
  <div class="pen-sep"></div>
  <div class="pb"><span class="swatch"></span></div>
  <div class="pb pb-n">14</div>
  <div class="pen-arrows"><svg width="20" height="18" viewBox="0 0 20 18"><path d="M3 9l7-6v4h7v4h-7v4z" fill="#ddd"/></svg><svg width="20" height="18" viewBox="0 0 20 18"><path d="M17 9l-7-6v4H3v4h7v4z" fill="#ddd"/></svg></div>
</aside>
</main>

<!-- Taskbar -->
<footer class="taskbar">
  <div class="pins">
    <div class="pin"><svg width="24" height="24" viewBox="0 0 24 24"><path d="M0 4l10-2v9H0zM12 1.500 24 0v11H12zM0 13h10v9L0 20zM12 13h12v11l-12-2z" fill="#000"/></svg></div>
    <div class="pin"><svg width="26" height="26" viewBox="0 0 26 26"><circle cx="16" cy="10" r="8.500" fill="none" stroke="#111" stroke-width="1.500"/><path d="M10 16 2 25" stroke="#111" stroke-width="1.500"/></svg></div>
    <div class="pin"><svg width="38" height="38" viewBox="0 0 38 38"><defs><linearGradient id="eg" x1="0" y1="0" x2="1" y2="1"><stop offset="0" stop-color="#2fc46c"/><stop offset="1" stop-color="#0f6fc4"/></linearGradient></defs><circle cx="19" cy="19" r="18" fill="url(#eg)"/><path d="M2 24C2 12 14 6 24 9c7 2 12 8 11 15-6 3-12 1-16-1 6 0 9-3 7-6-3-4-12-3-15 3-2 5 2 12 9 14C10 36 2 32 2 24z" fill="#1277c8"/><path d="M18 21c2 4 9 7 16 4-3 7-10 11-17 10-5-3-8-9-5-13z" fill="#0f5fae"/></svg></div>
    <div class="pin"><svg width="34" height="38" viewBox="0 0 34 38"><circle cx="17" cy="19" r="17" fill="#c9704a"/><path d="M0 19a17 17 0 0 0 34 0z" fill="#7f5bb5"/><circle cx="17" cy="19" r="10" fill="#111"/><circle cx="17" cy="19" r="6" fill="#eee"/><circle cx="17" cy="19" r="2.500" fill="#333"/><path d="M24 9l5-4" stroke="#222" stroke-width="3"/></svg></div>
  </div>
  <div class="apps">
    <div class="app a-video"><svg width="20" height="34" viewBox="0 0 20 34"><path d="M1 1h13l5 4v24l-8 4H4z" fill="#f5d76e"/><path d="M1 1h11v30l-7-1z" fill="#f0c94d"/></svg><span>视频</span></div>
    <div class="app a-xl"><svg width="35" height="36" viewBox="0 0 35 36"><rect x="7" y="1" width="28" height="34" fill="#21a366"/><rect x="21" y="1" width="14" height="17" fill="#33c481"/><rect x="7" y="18" width="14" height="17" fill="#107c41"/><rect x="21" y="18" width="14" height="17" fill="#185c37"/><rect x="0" y="9" width="17" height="18" fill="#107c41"/><path d="M5 13l7 10M12 13 5 23" stroke="#fff" stroke-width="2"/></svg><span>第一章 CAD操...</span></div>
    <div class="app a-cad"><svg width="36" height="36" viewBox="0 0 36 36"><rect width="36" height="36" fill="#f2dbd4"/><path d="M6 33 16 5h7l4 28-6-2-1-9h-5l-4 11z" fill="#b71f2e"/><path d="M23 5l4 28-6-2-2-26z" fill="#7e1622"/></svg><span>Drawing1.dwg</span></div>
    <div class="app a-cad2"><svg width="36" height="36" viewBox="0 0 36 36"><rect width="36" height="36" fill="#f2dbd4"/><path d="M6 33 16 5h7l4 28-6-2-1-9h-5l-4 11z" fill="#b71f2e"/><path d="M23 5l4 28-6-2-2-26z" fill="#7e1622"/></svg><span>卫生间详图.d...</span></div>
    <div class="app a-pdf"><svg width="36" height="38" viewBox="0 0 36 38"><path d="M8 3h20l7 7v27H8z" fill="#f4f4f4" stroke="#bbb"/><rect x="1" y="1" width="24" height="15" fill="#a4161f"/><text class="pdf-t" x="13" y="12" text-anchor="middle">PDF</text><path d="M12 33c6-4 9-11 9-16 2 7 5 11 11 12-6-1-14 0-20 4z" fill="none" stroke="#b21f2a" stroke-width="2"/></svg><span>首页.pdf - Ad...</span></div>
    <div class="app a-band"><svg width="36" height="40" viewBox="0 0 36 40"><ellipse cx="18" cy="20" rx="17" ry="19" fill="#111" stroke="#ddd" stroke-width="1.500"/><circle cx="18" cy="20" r="11" fill="#e8252a"/></svg><span>Bandicam</span></div>
  </div>
  <div class="sys">
    <svg width="20" height="12" viewBox="0 0 20 12"><path d="M1 11l9-9 9 9" fill="none" stroke="#111" stroke-width="1.300"/></svg>
    <svg class="s-mic" width="18" height="26" viewBox="0 0 18 26"><rect x="5" y="0" width="9" height="17" rx="4" fill="#111"/><path d="M2 12c0 6 3 8 7 8s7-2 7-8M9 20v4M4 25h10" fill="none" stroke="#111" stroke-width="1.400"/></svg>
    <svg class="s-bat" width="26" height="18" viewBox="0 0 26 18"><rect x="6" y="6" width="18" height="10" fill="#111"/><rect x="24" y="9" width="2" height="4" fill="#111"/><path d="M1 1v5h5V1M3.500 6v5h3" fill="none" stroke="#111" stroke-width="1.200"/></svg>
    <svg class="s-vol" width="24" height="24" viewBox="0 0 24 24"><path d="M1 8h4l6-6v20l-6-6H1z" fill="none" stroke="#222"/><path d="M14 8c2 2 2 6 0 8M18 5c3 4 3 10 0 14" fill="none" stroke="#777"/></svg>
    <svg class="s-qq" width="20" height="24" viewBox="0 0 20 24"><path d="M10 0c5 0 7 4 7 8 2 4 3 7 2 10-1 0-2-1-2-2-1 3-3 6-7 6s-6-3-7-6c0 1-1 2-2 2-1-3 0-6 2-10 0-4 2-8 7-8z" fill="#111"/><ellipse cx="10" cy="16" rx="6" ry="6" fill="#fff"/><path d="M3 11c4 2 10 2 14 0l1 2-5 2v4l-3-3-7-2z" fill="#d92b2b"/><path d="M3 23h5M12 23h5" stroke="#e8a11e" stroke-width="2"/></svg>
    <svg class="s-wifi" width="20" height="20" viewBox="0 0 20 20"><path d="M1 18C2 9 9 2 18 1M5 18c1-6 6-11 13-12M9 18c1-3 3-6 8-7" fill="none" stroke="#444" stroke-width="1.100"/><circle cx="16" cy="17" r="1.800" fill="#111"/></svg>
    <span class="s-ime">中</span>
    <div class="clock"><span>22:13</span><span>2020/12/22</span></div>
    <svg class="s-note" width="24" height="24" viewBox="0 0 24 24"><path d="M0 0h24v19h-8l-4 4-3-4H0z" fill="#111"/><path d="M4 5h16M4 9h16M4 13h10" stroke="#cfe2c4" stroke-width="1.200"/><circle cx="19" cy="19" r="4.500" fill="#cfe2c4" stroke="#111" stroke-width="1.200"/></svg>
    <div class="s-show"></div>
  </div>
</footer>
</body>
</html>
```
FILE: styles.css
```css
* { box-sizing: border-box; }
html, body { margin: 0; padding: 0; }
body {
  width: 1920px; height: 1080px; overflow: hidden; position: relative;
  font-family: "Noto Sans CJK SC", "Noto Sans", sans-serif;
  background: #d0e3c3;
  display: flex; flex-direction: column;
}
svg { display: block; flex: none; }
i { display: block; font-style: normal; }

.desk { display: flex; height: 1020px; position: relative; }

/* ------ AutoCAD ------ */
.cad { width: 1510px; height: 1020px; display: flex; flex-direction: column; background: #1f2733; position: relative; color: #e2e4e7; }
.cad-logo { position: absolute; left: 7px; top: 7px; width: 59px; height: 59px; background: linear-gradient(#d8d8d8, #777); z-index: 3; border: 1px solid #1c1c1c; }
.cad-title { height: 42px; flex: none; background: #3d4655; display: flex; align-items: center; padding-left: 78px; border-top: 2px solid #e8e8e8; }
.doc-name { width: 124px; margin-left: 28px; font-size: 18px; letter-spacing: .2px; color: #8e97a5; white-space: nowrap; }
.next { margin-left: 32px; }
.search { width: 268px; height: 33px; margin-left: 5px; background: #4a5463; border: 1px solid #262d39; font-size: 15px; font-style: italic; font-weight: 700; color: #9ea5b0; padding-left: 4px; line-height: 30px; }
.binoc { margin-left: 8px; }
.login { width: 38px; margin-left: 7px; font-size: 18px; line-height: 24px; color: #e8e8e8; }
.tray { margin-left: 84px; }
.winbtns { margin-left: 98px; }

.cad-menu { height: 30px; flex: none; display: flex; align-items: stretch; padding-left: 78px; }
.menu-item { font-size: 18px; line-height: 28px; padding: 2px 15px 0; color: #c9ced5; white-space: nowrap; }
.menu-item.on { background: #3d4655; margin-top: 5px; height: 25px; line-height: 25px; color: #e8eaee; padding: 0 13px; margin-right: 2px; }
.menu-toggle { margin: 9px 0 0 43px; }

.ribbon { height: 145px; flex: none; margin-top: 2px; display: flex; padding-left: 10px; gap: 3px; }
.panel { background: #3d4655; display: flex; flex-direction: column; flex: none; }
.p-draw { width: 313px; }
.p-mod { width: 198px; }
.p-ann { width: 188px; }
.p-body { display: flex; flex: 1; min-height: 0; }
.p-foot { height: 28px; flex: none; display: flex; align-items: center; justify-content: center; gap: 6px; font-size: 18px; color: #dfe2e6; margin-bottom: -1px; }
.fcaret { width: 0; height: 0; border-left: 6px solid transparent; border-right: 6px solid transparent; border-top: 6px solid #dfe2e6; }

.tool { display: flex; flex-direction: column; align-items: center; padding-top: 10px; flex: none; }
.p-draw .p-body { padding-left: 4px; }
.w58 { width: 58px; } .w60 { width: 60px; } .w66 { width: 66px; } .w74 { width: 74px; } .w52 { width: 52px; }
.tl { font-size: 18px; line-height: 24px; margin-top: 5px; color: #e2e4e7; white-space: nowrap; }
.tl-a { margin-top: 2px; }
.tcaret { width: 0; height: 0; border-left: 4px solid transparent; border-right: 4px solid transparent; border-top: 6px solid #cfd3d9; margin-top: 3px; }
.scaret { width: 0; height: 0; border-left: 3.500px solid transparent; border-right: 3.500px solid transparent; border-top: 5px solid #cfd3d9; }
.scaret.big { border-left-width: 5px; border-right-width: 5px; border-top-width: 8px; }

.small-col { display: flex; flex-direction: column; padding-top: 5px; flex: none; }
.srow { height: 36px; display: flex; align-items: center; gap: 9px; }
.sc-draw { padding-left: 8px; }
.sc-ann { padding-left: 7px; }

.mod-grid { display: grid; grid-template-columns: 46px 44px 60px 46px; grid-auto-rows: 36px; padding-top: 5px; align-items: center; justify-items: center; align-content: start; }
.mcell { display: flex; align-items: center; gap: 7px; width: 100%; padding-left: 6px; }

.big-a { font-family: "Liberation Sans", sans-serif; font-size: 60px; line-height: 48px; height: 48px; color: #cfd2d6; }

.large { height: 145px; align-items: center; padding-top: 7px; background: #4a5568; position: relative; }
.w87 { width: 87px; } .w86 { width: 86px; } .w85 { width: 85px; }
.large + .large { margin-left: 3px; }
.large .tl { margin-top: 3px; }
.lcaret { width: 0; height: 0; border-left: 6px solid transparent; border-right: 6px solid transparent; border-top: 7px solid #dfe2e6; margin-top: auto; margin-bottom: 7px; }
.view-p { width: 90px; margin-left: 1px; }
.view-body { flex-direction: column; align-items: center; padding-top: 14px; }
.view-body .tl { margin-top: 9px; }
.view-foot { gap: 8px; font-size: 18px; }
.launch { margin-left: 4px; }

.tabs { height: 46px; flex: none; padding-top: 7px; padding-left: 36px; display: flex; align-items: flex-start; border-bottom: 7px solid #303845; }
.tab { height: 32px; font-size: 18px; line-height: 30px; color: #c9ced5; display: flex; justify-content: space-between; align-items: center; flex: none; border-radius: 10px 10px 0 0; }
.t-start { width: 188px; padding-left: 17px; background: #2a323f; }
.t-active { width: 181px; background: #3a4351; padding: 0 16px 0 14px; margin-left: 2px; font-size: 19px; }
.t-other { width: 180px; background: #2e3643; padding: 0 16px 0 13px; margin-left: 3px; color: #bfc4cc; }
.tab-add { width: 30px; height: 30px; margin-left: 15px; background: #2e3643; color: #aeb4bc; font-size: 22px; line-height: 30px; text-align: center; font-weight: 700; border-radius: 6px; }

/* canvas */
.canvas { height: 707px; flex: none; margin: 0 5px; background: #000; position: relative; overflow: hidden; }
.cv-lines { position: absolute; left: 0; top: 0; }
.mtext { position: absolute; left: 552px; top: 243px; width: 176px; height: 42px; background: rgba(172, 172, 172, .95); color: #1c5fa9; font-size: 28.500px; line-height: 38px; padding-left: 2px; white-space: nowrap; border-bottom: 1px solid #4f6a85; }
.cursor { position: absolute; left: 548px; top: 238px; }
.vp-ctrl { position: absolute; left: 1410px; top: 10px; }
.cube { position: absolute; left: 1301px; top: 62px; width: 182px; height: 160px; }
.ring { position: absolute; left: 13px; top: 2px; width: 156px; height: 156px; border-radius: 50%; border: 18px solid #333; }
.cube-face { position: absolute; left: 57px; top: 46px; width: 68px; height: 68px; background: #a6a6a6; display: flex; align-items: center; justify-content: center; }
.cube-face span { width: 40px; height: 40px; background: #999; font-size: 40px; line-height: 38px; text-align: center; color: #555; }
.cd { position: absolute; font-size: 24px; line-height: 28px; color: #9c9c9c; width: 28px; text-align: center; }
.cd-n { left: 77px; top: -7px; } .cd-s { left: 77px; top: 139px; } .cd-w { left: 3px; top: 66px; } .cd-e { left: 149px; top: 65px; }
.wcs { position: absolute; left: 1357px; top: 255px; width: 69px; height: 25px; border-radius: 5px; background: #85858f; color: #50515a; font-family: "Liberation Sans", sans-serif; font-size: 15px; line-height: 25px; padding-left: 6px; display: flex; align-items: center; gap: 8px; }
.wcaret { width: 0; height: 0; border-left: 5px solid transparent; border-right: 5px solid transparent; border-top: 5px solid #a0a0a8; }
.navbar { position: absolute; left: 1450px; top: 263px; }

.cmd { position: absolute; left: 301px; top: 668px; width: 899px; height: 39px; display: flex; background: #2a303c; border-radius: 4px 4px 0 0; }
.cmd-tools { width: 85px; flex: none; }
.cmd-input { flex: 1; height: 36px; margin-top: 1px; background: #b0b0b0; border-radius: 0 4px 4px 0; display: flex; align-items: center; }
.cmd-ph { font-size: 20px; color: #666; font-style: italic; margin-left: 12px; }
.cmd-up { margin-left: auto; margin-right: 6px; }

.cad-status { height: 48px; flex: none; display: flex; align-items: flex-start; padding-left: 24px; border-bottom: 4px solid #333b48; background: #1f2733; }
.lt { height: 27px; font-size: 18px; line-height: 26px; padding: 0 14px; color: #a7adb6; background: #2b3340; margin-right: 7px; border-radius: 0 0 6px 6px; }
.lt-on { width: 70px; text-align: center; font-weight: 700; color: #f2f2f2; padding: 0; margin-right: 3px; }
.lt-add { width: 30px; height: 27px; background: #2b3340; color: #a7adb6; font-size: 22px; font-weight: 700; line-height: 24px; text-align: center; margin-left: 7px; }
.st-right { margin-left: auto; margin-right: 7px; display: flex; align-items: flex-start; margin-top: 4px; gap: 3px; }
.coords { width: 225px; height: 36px; background: #3a4351; font-size: 17px; line-height: 35px; color: #dfe2e6; text-align: right; padding-right: 7px; white-space: nowrap; margin-right: 4px; }
.sg { display: flex; height: 36px; background: #3a4351; gap: 1px; }
.sg-snap { margin-right: 6px; }
.sg.bare { background: none; margin-left: 2px; }
.sg-cust { margin-left: 6px; }
.sg-last { margin-left: 9px; }
.sb { height: 36px; display: flex; align-items: center; justify-content: center; flex: none; }
.sb.on { background: #5b8cc2; height: 34px; margin-top: 1px; }
.w34 { width: 34px; } .w36 { width: 36px; } .w38 { width: 38px; } .w40 { width: 40px; } .w16 { width: 16px; } .w18 { width: 18px; } .w22 { width: 22px; }

/* ------ Excel ------ */
.xl { width: 410px; height: 1020px; background: #e6e6e6; display: flex; flex-direction: column; overflow: hidden; }
.xl-top { height: 7px; flex: none; background: #fff; border-bottom: 1px solid #888; }
.xl-title { height: 44px; flex: none; background: #fff; display: flex; align-items: center; padding-left: 2px; border-bottom: 1px solid #aaa; }
.xl-name { font-size: 20px; letter-spacing: .3px; color: #b4b4b4; margin-left: 13px; white-space: nowrap; }
.xl-btns { margin-left: 12px; }
.xl-formula { height: 67px; flex: none; display: flex; align-items: center; background: #e6e6e6; }
.namebox { width: 146px; height: 36px; background: #fff; border: 1px solid #ccc; border-left: 0; font-family: "Noto Sans", sans-serif; font-size: 20px; line-height: 34px; color: #222; padding-left: 1px; display: flex; justify-content: space-between; align-items: center; padding-right: 9px; }
.nb-caret { width: 0; height: 0; border-left: 4px solid transparent; border-right: 4px solid transparent; border-top: 5px solid #666; }
.fdots { margin-left: 20px; }
.fbox { width: 165px; height: 36px; margin-left: 22px; background: #fff; border: 1px solid #ccc; display: flex; align-items: center; gap: 34px; padding-left: 17px; flex: none; }
.fx { font-family: "Liberation Serif", serif; font-style: italic; font-weight: 700; font-size: 22px; color: #777; line-height: 1; }

.xl-body { height: 732px; flex: none; display: flex; }
.sheet { width: 389px; display: grid; grid-template-columns: 24px 42px 317px 6px; grid-template-rows: 25px 84px repeat(9, 51px) repeat(5, 28px) 24px; background: #fff; overflow: hidden; }
.cell { min-width: 0; overflow: hidden; }
.corner { background: #e6e6e6; padding: 4px 0 0 3px; }
.colhead { background: #e6e6e6; font-family: "Liberation Serif", serif; font-size: 17px; line-height: 27px; text-align: center; color: #222; border-left: 1px solid #bbb; border-bottom: 1px solid #bbb; }
.blank-h { background: #e6e6e6; border-bottom: 1px solid #bbb; }
.rowhead { background: #e6e6e6; font-family: "Liberation Serif", serif; font-size: 19px; color: #222; display: flex; align-items: flex-end; border-bottom: 1px solid #ccc; overflow: visible; padding-left: 1px; }
.rowhead span { width: 10px; flex: none; display: flex; justify-content: center; line-height: 22px; white-space: nowrap; }
.r-big span { line-height: 26px; }
.title-red { grid-column: 2 / span 2; background: #943634; color: #fdf3f0; font-size: 45px; line-height: 56px; letter-spacing: 3px; padding-top: 28px; text-align: center; padding-left: 4px; font-weight: 300; white-space: nowrap; }
.filler { background: #fff; }
.navy-n { background: #17375e; color: #dde6f0; font-family: "Liberation Serif", serif; font-size: 31px; line-height: 51px; text-align: center; border-bottom: 1px solid #000; }
.navy-t { background: #17375e; color: #dde6f0; font-size: 27px; line-height: 51px; text-align: center; border-left: 1px solid #000; border-bottom: 1px solid #000; }
.wa { background: #fff; }
.wa-b { border-bottom: 1px solid #000; border-right: 1px solid #000; }
.body-c { background: #fff; font-size: 20px; line-height: 51px; color: #111; padding-left: 3px; border-left: 1px solid #000; border-bottom: 1px solid #000; border-right: 2px solid #000; white-space: nowrap; }
.gc { background: #fff; border-bottom: 1px solid #d4d4d4; border-right: 1px solid #c4c4c4; }
.vscroll { flex: 1; background: #e8e8e8; position: relative; border-left: 1px solid #bbb; display: flex; align-items: flex-end; justify-content: flex-end; }
.vdown { width: 17px; height: 23px; background: #fff; border: 1px solid #ddd; display: flex; align-items: center; justify-content: center; }

.xl-sheets { height: 33px; flex: none; background: #e6e6e6; display: flex; align-items: flex-start; padding-left: 15px; border-top: 1px solid #aaa; position: relative; }
.nav-arrows { margin-top: 8px; }
.stab { width: 105px; height: 30px; margin-left: -3px; margin-top: -1px; padding-left: 4px; background: #fff; border-left: 1px solid #aaa; border-right: 1px solid #aaa; border-bottom: 3px solid #217346; color: #217346; font-size: 20px; line-height: 26px; text-align: center; }
.stab2 { width: 86px; padding-left: 18px; font-size: 20px; line-height: 26px; color: #444; white-space: nowrap; }
.sheet-rest { margin-left: 3px; }
.xl-status { height: 33px; flex: none; background: #f3f3f3; display: flex; align-items: center; padding-left: 20px; }
.view-on { width: 60px; height: 33px; background: #c6c6c6; display: flex; align-items: center; justify-content: center; }
.view-b { width: 60px; display: flex; justify-content: center; }
.zoomer { margin-left: 4px; }
.xl-bottom { flex: 1; display: flex; background: #e6e6e6; border-top: 2px solid #888; }
.xl-left { width: 56px; height: 97px; background: #fff; }
.xl-gray { width: 328px; background: #595959; }
.xl-vb { flex: 1; background: #ececec; display: flex; justify-content: center; align-items: flex-end; padding-bottom: 8px; }

/* ------ drawing toolbar ------ */
.pen { position: absolute; left: 1867px; top: 0; width: 53px; height: 565px; background: #222426; display: flex; flex-direction: column; align-items: center; gap: 4px; z-index: 5; padding-right: 2px; }
.pen-x { margin: 12px 0 7px 16px; }
.pb { width: 39px; height: 38px; flex: none; background: #15171a; border: 1px solid #3c3f43; display: flex; align-items: center; justify-content: center; color: #ddd; }
.g4 { margin-top: 7px; }
.pb-t { background: #3b9bff; border: 0; font-family: "Liberation Serif", serif; font-size: 34px; line-height: 38px; color: #e8f2ff; }
.pb-n { font-family: "Liberation Sans", sans-serif; font-size: 15px; }
.pen-sep { height: 10px; width: 100%; flex: none; }
.swatch { width: 24px; height: 24px; background: #0a84ff; border: 1px solid #999; }
.pen-arrows { width: 42px; height: 22px; margin-top: 15px; border: 1px solid #444; display: flex; align-items: center; justify-content: space-between; background: #333; flex: none; }
.ball { font-family: "Liberation Sans", sans-serif; font-size: 10px; font-weight: 700; fill: #333; }

/* ------ taskbar ------ */
.taskbar { height: 60px; flex: none; background: #d0e3c3; display: flex; align-items: stretch; }
.pins { width: 297px; flex: none; display: grid; grid-template-columns: 73px 70px 78px 68px; align-items: center; justify-items: center; }
.apps { display: flex; gap: 13px; }
.app { height: 60px; width: 184px; border-bottom: 3px solid #0a78c8; display: flex; align-items: center; font-size: 18px; color: #111; white-space: nowrap; gap: 4px; flex: none; padding-left: 8px; }
.a-video { padding-left: 13px; gap: 14px; width: 184px; }
.a-xl { width: 185px; }
.a-cad { width: 182px; padding-left: 7px; letter-spacing: .5px; }
.a-cad2 { width: 183px; padding-left: 7px; }
.a-pdf { width: 183px; padding-left: 8px; letter-spacing: .4px; }
.a-band { width: 184px; padding-left: 8px; gap: 6px; }
.pdf-t { font-family: "Liberation Sans", sans-serif; font-size: 10px; font-weight: 700; fill: #fff; letter-spacing: 0; }
.sys { flex: 1; display: flex; align-items: center; padding-left: 22px; }
.s-mic { margin-left: 14px; }
.s-bat { margin-left: 16px; }
.s-vol { margin-left: 12px; }
.s-qq { margin-left: 14px; }
.s-wifi { margin-left: 17px; }
.s-ime { font-size: 24px; margin-left: 10px; width: 24px; color: #111; }
.clock { width: 104px; margin-left: 9px; display: flex; flex-direction: column; align-items: center; font-size: 20px; line-height: 28px; color: #111; white-space: nowrap; }
.s-note { margin-left: 24px; }
.s-show { width: 1px; height: 60px; background: #9fb096; margin-left: 31px; }
```
